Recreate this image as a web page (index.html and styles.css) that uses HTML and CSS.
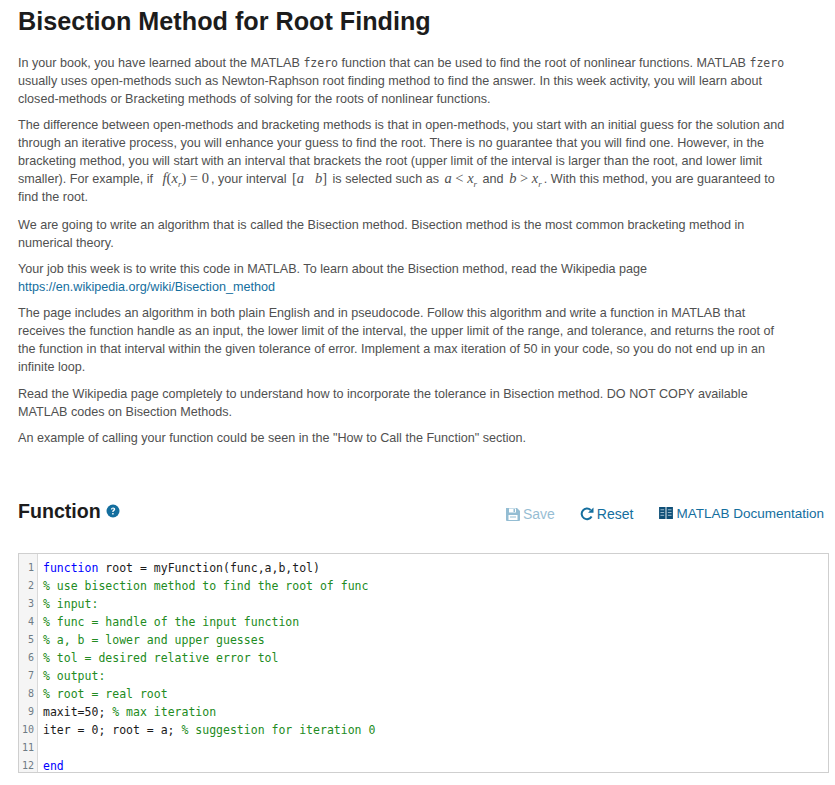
FILE: index.html
```html
<!DOCTYPE html>
<html lang="en">
<head>
    <meta charset="UTF-8">
    <meta name="viewport" content="width=device-width, initial-scale=1.0">
    <title>Bisection Method for Root Finding</title>
    <link rel="stylesheet" href="styles.css">
</head>
<body>

    <h1 class="title">Bisection Method for Root Finding</h1>

    <div class="description">
        <p>In your book, you have learned about the MATLAB <code>fzero</code> function that can be used to find the root of nonlinear functions. MATLAB <code>fzero</code> usually uses open-methods such as Newton-Raphson root finding method to find the answer. In this week activity, you will learn about closed-methods or Bracketing methods of solving for the roots of nonlinear functions.</p>
        <p class="gap-large">The difference between open-methods and bracketing methods is that in open-methods, you start with an initial guess for the solution and through an iterative process, you will enhance your guess to find the root. There is no guarantee that you will find one. However, in the bracketing method, you will start with an interval that brackets the root (upper limit of the interval is larger than the root, and lower limit smaller). For example, if <span class="math math-first"><i>f</i>(<i>x<sub>r</sub></i>) = 0</span>, your interval <span class="math">[<i>a</i> &nbsp; <i>b</i>]</span> is selected such as <span class="math"><i>a</i> &lt; <i>x<sub>r</sub></i></span> and <span class="math"><i>b</i> &gt; <i>x<sub>r</sub></i></span>. With this method, you are guaranteed to find the root.</p>
        <p>We are going to write an algorithm that is called the Bisection method. Bisection method is the most common bracketing method in numerical theory.</p>
        <p>Your job this week is to write this code in MATLAB. To learn about the Bisection method, read the Wikipedia page<br><a href="#">https://en.wikipedia.org/wiki/Bisection_method</a></p>
        <p class="gap-medium">The page includes an algorithm in both plain English and in pseudocode. Follow this algorithm and write a function in MATLAB that receives the function handle as an input, the lower limit of the interval, the upper limit of the range, and tolerance, and returns the root of the function in that interval within the given tolerance of error. Implement a max iteration of 50 in your code, so you do not end up in an infinite loop.</p>
        <p>Read the Wikipedia page completely to understand how to incorporate the tolerance in Bisection method. DO NOT COPY available MATLAB codes on Bisection Methods.</p>
        <p>An example of calling your function could be seen in the "How to Call the Function" section.</p>
    </div>

    <div class="function-header">
        <h2 class="function-title">Function
            <svg class="help-icon" viewBox="0 0 14 14" width="14" height="14"><circle cx="7" cy="7" r="6.5" fill="#146e9e"/><path d="M4.9 5.4c.1-1.3 1-2 2.2-2 1.200 0 2.100.7 2.100 1.800 0 1.500-1.700 1.500-1.700 2.800H6.200c0-1.900 1.500-1.900 1.500-2.700 0-.4-.3-.7-.7-.7-.5 0-.8.3-.8.8z" fill="#fff"/><rect x="6.200" y="9" width="1.400" height="1.500" fill="#fff"/></svg>
        </h2>
        <div class="actions">
            <a class="action disabled" href="#">
                <svg viewBox="0 0 14 14" width="14" height="14"><path d="M0 1h11l3 3v9a1 1 0 0 1-1 1H1a1 1 0 0 1-1-1z" fill="#146e9e"/><rect x="3" y="1.500" width="7" height="4" fill="#fff"/><rect x="7.500" y="2" width="1.500" height="3" fill="#146e9e"/><rect x="2.500" y="8" width="9" height="5" fill="#fff"/><rect x="4" y="9.500" width="6" height="1" fill="#146e9e"/></svg>
                Save
            </a>
            <a class="action" href="#">
                <svg viewBox="0 0 14 14" width="14" height="14"><path d="M11.600 9.500A5.300 5.300 0 1 1 10.600 3" fill="none" stroke="#146e9e" stroke-width="2"/><path d="M8 5.800h5.500V.5z" fill="#146e9e"/></svg>
                Reset
            </a>
            <a class="action doc-link" href="#">
                <svg viewBox="0 0 15 13" width="14" height="12"><path d="M0 0h7v13H0zM8 0h7v13H8z" fill="#0e4f77"/><path d="M1.500 3h4M1.500 6h4M1.500 9h4M9.500 3h4M9.500 6h4M9.500 9h4" stroke="#a9c4d6" stroke-width="1"/></svg>
                MATLAB Documentation
            </a>
        </div>
    </div>

    <div class="editor">
        <div class="gutter">
            <div>1</div><div>2</div><div>3</div><div>4</div><div>5</div><div>6</div>
            <div>7</div><div>8</div><div>9</div><div>10</div><div>11</div><div>12</div>
        </div>
        <pre class="code"><span class="kw">function</span> root = myFunction(func,a,b,tol)
<span class="cm">% use bisection method to find the root of func</span>
<span class="cm">% input:</span>
<span class="cm">% func = handle of the input function</span>
<span class="cm">% a, b = lower and upper guesses</span>
<span class="cm">% tol = desired relative error tol</span>
<span class="cm">% output:</span>
<span class="cm">% root = real root</span>
maxit=50; <span class="cm">% max iteration</span>
iter = 0; root = a; <span class="cm">% suggestion for iteration 0</span>

<span class="kw">end</span></pre>
    </div>

</body>
</html>
```

FILE: styles.css
```css
* {
    margin: 0;
    padding: 0;
    box-sizing: border-box;
}
body {
    font-family: "Liberation Sans", Arial, sans-serif;
    background-color: #fff;
    padding: 0 6px 0 18px;
    color: #505050;
}
a {
    text-decoration: none;
    color: #146e9e;
}
.title {
    font-size: 25.2px;
    line-height: 32px;
    padding-top: 5px;
    color: #1c1c1c;
}
.description {
    margin-top: 17px;
    width: 772px;
    font-size: 12.6px;
    line-height: 18px;
}
.description p {
    margin-bottom: 8px;
}
.description .gap-large {
    margin-bottom: 10px;
}
.description .gap-medium {
    margin-bottom: 9px;
}
code {
    font-family: "DejaVu Sans Mono", monospace;
    font-size: 11.5px;
}
.math {
    font-family: "Liberation Serif", serif;
    font-size: 14.5px;
    line-height: 1;
    padding: 0 2px;
}
.math-first {
    margin-left: 4px;
}
.math sub {
    font-size: 9px;
    line-height: 0;
}
.function-header {
    display: flex;
    justify-content: space-between;
    align-items: center;
    margin-top: 49px;
    height: 30px;
}
.function-title {
    font-size: 19.6px;
    color: #1c1c1c;
    display: flex;
    align-items: center;
    gap: 5px;
}
.actions {
    display: flex;
    align-items: center;
    gap: 25px;
    padding: 6px 5px 0 0;
    font-size: 14px;
}
.action {
    display: flex;
    align-items: center;
    gap: 3px;
}
.disabled {
    opacity: 0.45;
}
.doc-link {
    font-size: 13.5px;
    margin-bottom: 2px;
    margin-left: 1px;
}
.editor {
    display: flex;
    margin-top: 27px;
    border: 1px solid #cfcfcf;
    width: 811px;
    height: 220px;
    font-family: "DejaVu Sans Mono", monospace;
    font-size: 11.5px;
    line-height: 18px;
    color: #1a1a1a;
}
.gutter {
    width: 19px;
    padding: 5px 3px 0 0;
    background-color: #f5f5f5;
    border-right: 1px solid #d9d9d9;
    text-align: right;
    font-size: 10px;
    color: #6e7b85;
}
.code {
    padding: 5px 0 0 5px;
    font: inherit;
}
.kw {
    color: #0000ff;
}
.cm {
    color: #228b22;
}
```
